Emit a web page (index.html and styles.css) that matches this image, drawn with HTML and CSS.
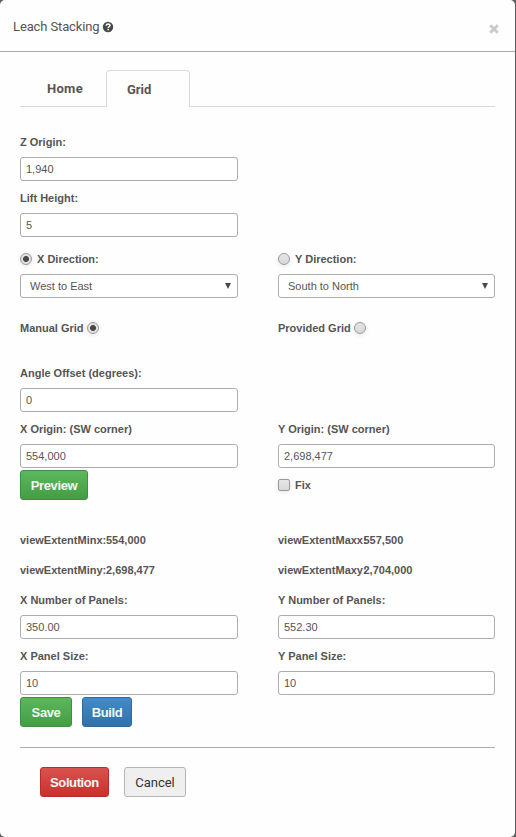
FILE: index.html
```html
<!DOCTYPE html>
<html lang="en">
<head>
<meta charset="utf-8">
<title>Leach Stacking</title>
<link rel="stylesheet" href="styles.css">
</head>
<body>
<div class="modal">
  <header class="modal-header">
    <span class="title">Leach Stacking</span>
    <svg class="help" viewBox="0 0 12 12"><circle cx="6" cy="6" r="5.2" fill="#484848"/><path d="M4.2 4.7C4.3 3.5 5 3 6 3c1.100 0 1.900.6 1.900 1.500C7.900 5.700 6.200 5.500 6.200 6.900" fill="none" stroke="#fff" stroke-width="1.500"/><rect x="5.400" y="7.800" width="1.600" height="1.500" fill="#fff"/></svg>
    <svg class="close" viewBox="0 0 10 10"><path d="M1.200 1.200l7.600 7.600M8.800 1.200L1.200 8.800" stroke="#c9c9c9" stroke-width="2.800"/></svg>
  </header>
  <nav class="tabs"><a class="tab home">Home</a><a class="tab active">Grid</a></nav>
  <form class="form">
    <div class="row">
      <div class="col"><label class="label"><span>Z Origin:</span></label><input class="input" value="1,940"></div>
    </div>
    <div class="row">
      <div class="col"><label class="label"><span>Lift Height:</span></label><input class="input" value="5"></div>
    </div>
    <div class="row directions">
      <div class="col"><label class="label"><i class="radio on"></i><span>X Direction:</span></label>
        <div class="input select"><span>West to East</span><svg class="arrow" viewBox="0 0 6 6"><path d="M0 0h6L3 6z"/></svg></div></div>
      <div class="col"><label class="label"><i class="radio"></i><span>Y Direction:</span></label>
        <div class="input select"><span>South to North</span><svg class="arrow" viewBox="0 0 6 6"><path d="M0 0h6L3 6z"/></svg></div></div>
    </div>
    <div class="row modes">
      <div class="col"><label class="label"><span>Manual Grid</span><i class="radio on after"></i></label></div>
      <div class="col"><label class="label"><span>Provided Grid</span><i class="radio after"></i></label></div>
    </div>
    <div class="row">
      <div class="col"><label class="label"><span>Angle Offset (degrees):</span></label><input class="input" value="0"></div>
    </div>
    <div class="row">
      <div class="col"><label class="label"><span>X Origin: (SW corner)</span></label><input class="input" value="554,000"></div>
      <div class="col"><label class="label"><span>Y Origin: (SW corner)</span></label><input class="input" value="2,698,477"></div>
    </div>
    <div class="row preview">
      <div class="col"><button type="button" class="btn green">Preview</button></div>
      <div class="col"><label class="label"><i class="check"></i><span>Fix</span></label></div>
    </div>
    <div class="row extent">
      <div class="col label"><span class="key">viewExtentMinx:</span><span>554,000</span></div>
      <div class="col label"><span class="key">viewExtentMaxx:</span><span>557,500</span></div>
    </div>
    <div class="row extent">
      <div class="col label"><span class="key">viewExtentMiny:</span><span>2,698,477</span></div>
      <div class="col label"><span class="key">viewExtentMaxy:</span><span>2,704,000</span></div>
    </div>
    <div class="row">
      <div class="col"><label class="label"><span>X Number of Panels:</span></label><input class="input" value="350.00"></div>
      <div class="col"><label class="label"><span>Y Number of Panels:</span></label><input class="input" value="552.30"></div>
    </div>
    <div class="row">
      <div class="col"><label class="label"><span>X Panel Size:</span></label><input class="input" value="10"></div>
      <div class="col"><label class="label"><span>Y Panel Size:</span></label><input class="input" value="10"></div>
    </div>
    <div class="actions"><button type="button" class="btn green save">Save</button><button type="button" class="btn blue">Build</button></div>
    <footer class="footer"><button type="button" class="btn red">Solution</button><button type="button" class="btn plain">Cancel</button></footer>
  </form>
</div>
</body>
</html>
```
FILE: styles.css
```css
* { box-sizing: border-box; }
body { margin: 0; background: #5c5c5c; font-family: "Liberation Sans", Arial, sans-serif; color: #555; }
.modal { width: 515px; height: 837px; background: #fefefe; border-radius: 5px; }
.modal-header { height: 52px; border-bottom: 1px solid #adadad; display: flex; align-items: center; padding: 2px 16px 0 13px; }
.title { font-family: Roboto, sans-serif; font-size: 13px; letter-spacing: -0.12px; color: #555; }
.help { width: 12px; height: 12px; margin-left: 2px; }
.close { width: 10px; height: 10px; margin: 5px 0 0 auto; }
.tabs { display: flex; height: 37px; margin: 18px 20px 0; border-bottom: 1px solid #d9d9d9; width: 475px; font-family: Roboto, sans-serif; font-size: 13px; font-weight: 700; line-height: 37px; }
.home { width: 86px; padding-left: 27px; letter-spacing: 0.3px; }
.active { width: 84px; height: 37px; padding-left: 20px; border: 1px solid #d9d9d9; border-bottom: 0; border-radius: 4px 4px 0 0; background: #fefefe; }
.form { margin: 20px 20px 0; width: 475px; }
.row { display: grid; grid-template-columns: 218px 217px; column-gap: 40px; margin-bottom: 2px; }
.label { display: flex; align-items: center; height: 30px; font-size: 11px; font-weight: 700; white-space: nowrap; }
.input { display: block; width: 100%; height: 24px; border: 1px solid #adadad; border-radius: 3px; padding: 0 5px; background: #fff; font: 11px "Liberation Sans", Arial, sans-serif; letter-spacing: 0; color: #555; outline: 0; }
.select { display: flex; align-items: center; justify-content: space-between; padding: 0 6px 0 9px; }
.arrow { width: 6px; height: 6px; fill: #484848; }
.directions { margin-top: 7px; margin-bottom: 15px; }
.modes { margin-bottom: 15px; }
.radio, .check { display: block; flex: none; width: 12px; height: 12px; margin-right: 5px; border: 1px solid #999; background: linear-gradient(#e6e6e6, #d8d8d8); box-shadow: 0 1px 5px rgba(0,0,0,.1); }
.radio { border-radius: 50%; }
.check { border-radius: 2px; }
.on { background: radial-gradient(circle, #484848 0 2.6px, #e2e2e2 3.3px); }
.after { margin: 0 0 0 3px; }
.preview { margin-bottom: 25px; }
.extent { margin-bottom: 0; }
.key { width: 86px; }
.col:nth-child(2) .key { width: 85.5px; }
.btn { height: 30px; padding: 0; border: 1px solid #3e8f3e; border-radius: 3px; font: 700 13px "Liberation Sans", Arial, sans-serif; letter-spacing: -0.4px; color: #f3f8f3; }
.green { width: 68px; background: linear-gradient(#5cb85c, #449d44); }
.save { width: 52px; }
.blue { width: 50px; background: linear-gradient(#428bca, #3071a9); border-color: #2d6ca2; }
.actions { display: flex; gap: 10px; }
.footer { margin-top: 20px; border-top: 1px solid #adadad; padding: 19px 20px 0; display: flex; gap: 15px; }
.red { width: 69px; background: linear-gradient(#d9534f, #c9302c); border-color: #b92c28; }
.plain { width: 62px; background: #efefef; border-color: #b5b5b5; color: #333; font-weight: 400; font-family: Roboto, sans-serif; letter-spacing: 0; }
```
